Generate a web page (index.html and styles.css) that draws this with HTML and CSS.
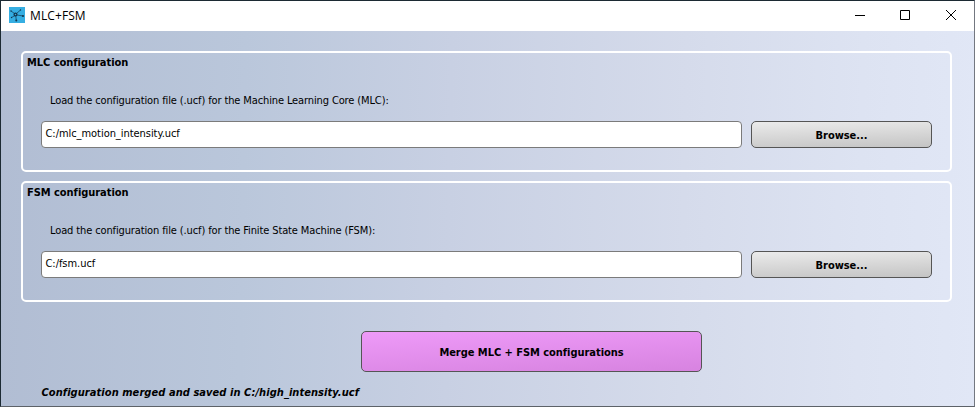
FILE: index.html
```html
<!DOCTYPE html>
<html lang="en">
<head>
<meta charset="utf-8">
<title>MLC+FSM</title>
<link rel="stylesheet" href="styles.css">
</head>
<body>
<div class="window">
  <header class="titlebar">
    <svg class="app-icon" viewBox="0 0 16 16" width="16" height="16">
      <rect width="16" height="16" fill="#35aee2"/>
      <g stroke="#12374f" stroke-width="0.7" fill="none">
        <path d="M2 4 5.500 6.500M11.500 3 7.500 6.500M8 8 14 9M6 8.500 2.500 10.500M6.800 9 7.300 13.500"/>
        <circle cx="6.500" cy="7.500" r="1.400" stroke-width="1.300"/>
      </g>
      <g fill="#12374f"><circle cx="2" cy="4" r=".7"/><circle cx="11.500" cy="3" r=".7"/><circle cx="14" cy="9" r="1.100"/><circle cx="2.500" cy="10.500" r=".7"/><circle cx="7.300" cy="13.500" r="1"/></g>
    </svg>
    <span class="caption">MLC+FSM</span>
    <div class="controls">
      <svg viewBox="0 0 46 30"><path d="M10 15.500h10"/></svg>
      <svg viewBox="0 0 46 30"><path d="M9.500 10.500h9v9h-9z"/></svg>
      <svg viewBox="0 0 46 30"><path d="m9 10 10 10M19 10 9 20"/></svg>
    </div>
  </header>
  <main class="content">
    <section class="group">
      <h2 class="group-title">MLC configuration</h2>
      <p class="hint">Load the configuration file (.ucf) for the Machine Learning Core (MLC):</p>
      <div class="row"><div class="field">C:/mlc_motion_intensity.ucf</div><button class="browse">Browse...</button></div>
    </section>
    <section class="group">
      <h2 class="group-title">FSM configuration</h2>
      <p class="hint">Load the configuration file (.ucf) for the Finite State Machine (FSM):</p>
      <div class="row"><div class="field">C:/fsm.ucf</div><button class="browse">Browse...</button></div>
    </section>
    <button class="merge">Merge MLC + FSM configurations</button>
    <p class="status">Configuration merged and saved in C:/high_intensity.ucf</p>
  </main>
</div>
</body>
</html>
```
FILE: styles.css
```css
* { box-sizing: border-box; }
body { margin: 0; overflow: hidden; }
.window {
  width: 975px; height: 407px; display: flex; flex-direction: column;
  border: 1px solid #1c2a33; border-right-color: #737780; border-bottom-color: #5d6268;
  font: 11px/14px "DejaVu Sans Condensed", "DejaVu Sans", sans-serif; font-stretch: condensed; color: #000;
}
.titlebar { height: 30px; flex: none; display: flex; align-items: center; background: #fff; padding-left: 8px; }
.app-icon { margin-top: -2px; }
.caption { margin-left: 5px; font: 12px/16px "Open Sans", sans-serif; letter-spacing: 0.1px; }
.controls { display: flex; margin-left: auto; margin-right: -9px; }
.controls svg { width: 46px; height: 30px; fill: none; stroke: #000; margin-top: -2px; }
.content {
  flex: 1; display: flex; flex-direction: column; padding: 20px 22px 0 20px;
  background: linear-gradient(91deg, #b1bdd3 0%, #bac7db 25%, #c8d0e3 46%, #d5dbeb 70%, #dde3f2 88%, #e1e7f6 100%);
}
.group { height: 121px; flex: none; border: 2px solid #fff; border-radius: 5px; margin-bottom: 9px; padding: 3px 18px 0 4px; }
.group-title { margin: 0; font-size: 11px; line-height: 14px; font-weight: 700; letter-spacing: -0.04px; }
.hint { margin: 24px 0 0 23px; letter-spacing: -0.122px; }
.row { display: flex; gap: 9px; margin: 13px 0 0 14px; }
.field { flex: 1; height: 27px; background: #fff; border: 1px solid #7b7b7b; border-radius: 4px; padding: 5px 3.5px; letter-spacing: -0.05px; }
button { font: inherit; font-weight: 700; color: #000; border: 1px solid #555; border-radius: 5px; padding: 2px 0 0; letter-spacing: -0.04px; }
.browse { width: 181px; height: 27px; background: linear-gradient(178deg, #ebebeb, #c4c4c4); }
.merge { width: 341px; height: 41px; flex: none; margin: 20px 0 0 340px; background: linear-gradient(177deg, #ee9af8, #d783e0); }
.status { margin: 14px 0 0 20.5px; font-weight: 700; font-style: italic; letter-spacing: 0.06px; }
```
